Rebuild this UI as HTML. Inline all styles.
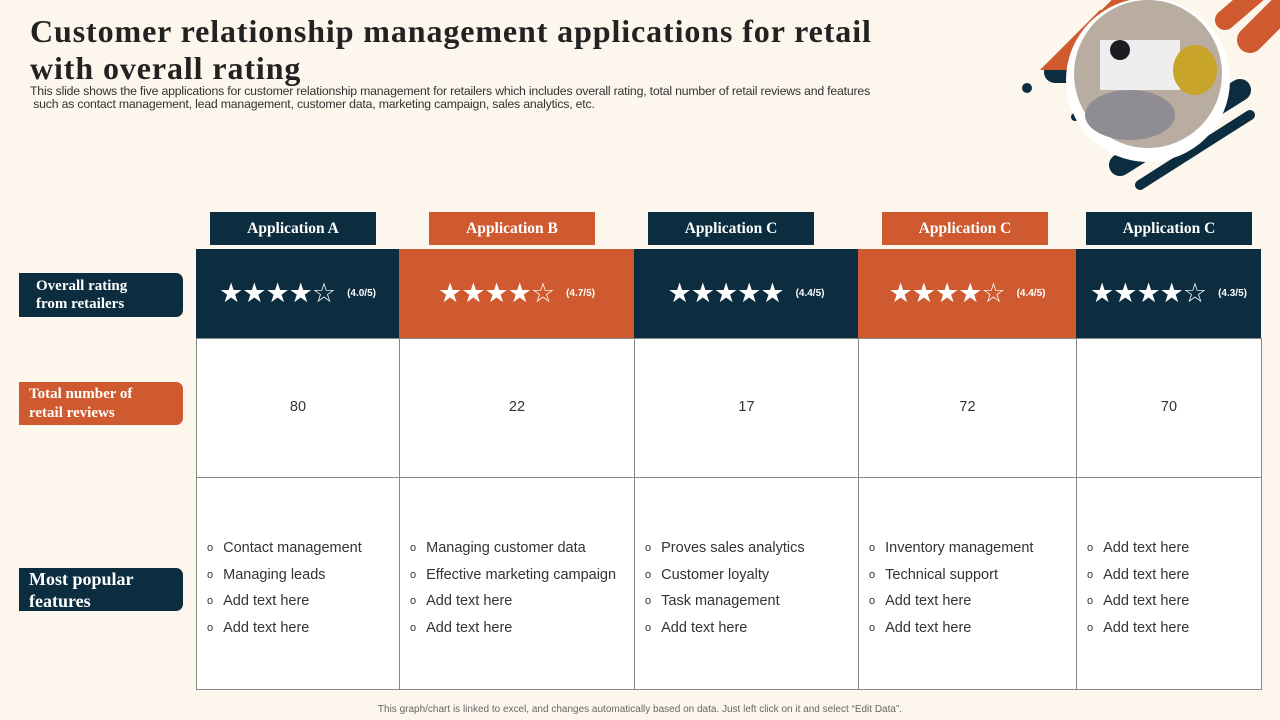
<!DOCTYPE html>
<html><head><meta charset="utf-8"><style>
*{margin:0;padding:0;box-sizing:border-box}
body{width:1280px;height:720px;background:#fdf6ec;position:relative;overflow:hidden;font-family:"Liberation Sans",sans-serif}
.a{position:absolute}
h1{position:absolute;left:30px;top:13px;font-family:"Liberation Serif",serif;font-size:32px;line-height:37px;font-weight:bold;color:#222;width:950px;white-space:nowrap;letter-spacing:0.9px}
.sub{left:30px;top:85px;font-size:12.3px;line-height:13px;color:#333;width:920px;letter-spacing:-0.2px;white-space:nowrap}
.hd{height:33px;color:#fff;font-family:"Liberation Serif",serif;font-weight:bold;font-size:15.5px;text-align:center;line-height:33px;top:212px}
.n{background:#0b2d3f}.o{background:#cf5a30}
.lab{left:19px;width:164px;color:#fff;font-family:"Liberation Serif",serif;font-weight:bold;border-radius:0 7px 7px 0;padding-left:14px}
.cell{border:1px solid #888;background:#fff}
.st{color:#fff;font-size:27px;letter-spacing:-1px;height:89px;display:flex;align-items:center;justify-content:center;gap:12px}
.st small{font-size:10px;font-weight:bold;letter-spacing:0}
.num{font-size:14.5px;color:#333;text-align:center;line-height:137px}
ul{list-style:none;padding:57px 0 0 10px;font-size:14.5px;color:#333}
li{height:26.5px;line-height:26.5px}
li:before{content:"o";font-size:11px;margin-right:10px;position:relative;top:-1px}
</style></head><body>
<h1>Customer relationship management applications for retail<br>with overall rating</h1>
<div class="a sub">This slide shows the five applications for customer relationship management for retailers which includes overall rating, total number of retail reviews and features<br>&nbsp;such as contact management, lead management, customer data, marketing campaign, sales analytics, etc.</div>

<svg class="a" style="left:1010px;top:0" width="270" height="210">
<g stroke-linecap="round" fill="none">
<line x1="60" y1="60" x2="120" y2="0" stroke="#cf5a30" stroke-width="26"/>
<line x1="240" y1="40" x2="270" y2="10" stroke="#cf5a30" stroke-width="26"/>
<line x1="215" y1="20" x2="250" y2="-10" stroke="#cf5a30" stroke-width="20"/>
<line x1="110" y1="165" x2="230" y2="90" stroke="#0b2d3f" stroke-width="22"/>
<line x1="130" y1="185" x2="240" y2="115" stroke="#0b2d3f" stroke-width="10"/>
<line x1="45" y1="72" x2="70" y2="72" stroke="#0b2d3f" stroke-width="22"/>
</g>
<path d="M30 70 L90 10 L160 10 L160 70 Z" fill="#cf5a30"/>
<circle cx="17" cy="88" r="5" fill="#0b2d3f"/><circle cx="65" cy="117" r="4" fill="#0b2d3f"/>
<circle cx="138" cy="80" r="82" fill="#fff"/>
<circle cx="138" cy="74" r="74" fill="#b9aca0"/>
<rect x="90" y="40" width="80" height="50" fill="#eee"/>
<ellipse cx="185" cy="70" rx="22" ry="25" fill="#c9a42a"/>
<ellipse cx="120" cy="115" rx="45" ry="25" fill="#8f8c93"/>
<circle cx="110" cy="50" r="10" fill="#1c1c22"/>
</svg>

<div class="a hd n" style="left:210px;width:166px">Application A</div>
<div class="a hd o" style="left:429px;width:166px">Application B</div>
<div class="a hd n" style="left:648px;width:166px">Application C</div>
<div class="a hd o" style="left:882px;width:166px">Application C</div>
<div class="a hd n" style="left:1086px;width:166px">Application C</div>

<div class="a lab n" style="top:273px;height:44px;font-size:15px;line-height:18px;padding-top:4px;padding-left:17px">Overall rating<br>from retailers</div>
<div class="a lab o" style="top:382px;height:43px;font-size:15px;line-height:19px;padding-top:3px;padding-left:10px">Total number of<br>retail reviews</div>
<div class="a lab n" style="top:568px;height:43px;font-size:18px;line-height:22px;padding-left:10px">Most popular<br>features</div>

<div class="a n st" style="left:196px;top:249px;width:203px">★★★★☆<small>(4.0/5)</small></div>
<div class="a o st" style="left:399px;top:249px;width:235px">★★★★☆<small>(4.7/5)</small></div>
<div class="a n st" style="left:634px;top:249px;width:224px">★★★★★<small>(4.4/5)</small></div>
<div class="a o st" style="left:858px;top:249px;width:218px">★★★★☆<small>(4.4/5)</small></div>
<div class="a n st" style="left:1076px;top:249px;width:185px">★★★★☆<small>(4.3/5)</small></div>

<div class="a cell num" style="left:196px;top:338px;width:204px;height:140px">80</div>
<div class="a cell num" style="left:399px;top:338px;width:236px;height:140px">22</div>
<div class="a cell num" style="left:634px;top:338px;width:225px;height:140px">17</div>
<div class="a cell num" style="left:858px;top:338px;width:219px;height:140px">72</div>
<div class="a cell num" style="left:1076px;top:338px;width:186px;height:140px">70</div>

<div class="a cell" style="left:196px;top:477px;width:204px;height:213px"><ul><li>Contact management</li><li>Managing leads</li><li>Add text here</li><li>Add text here</li></ul></div>
<div class="a cell" style="left:399px;top:477px;width:236px;height:213px"><ul><li>Managing customer data</li><li>Effective marketing campaign</li><li>Add text here</li><li>Add text here</li></ul></div>
<div class="a cell" style="left:634px;top:477px;width:225px;height:213px"><ul><li>Proves sales analytics</li><li>Customer loyalty</li><li>Task management</li><li>Add text here</li></ul></div>
<div class="a cell" style="left:858px;top:477px;width:219px;height:213px"><ul><li>Inventory management</li><li>Technical support</li><li>Add text here</li><li>Add text here</li></ul></div>
<div class="a cell" style="left:1076px;top:477px;width:186px;height:213px"><ul><li>Add text here</li><li>Add text here</li><li>Add text here</li><li>Add text here</li></ul></div>

<div class="a" style="left:0;width:1280px;top:704px;text-align:center;font-size:10px;color:#666">This graph/chart is linked to excel, and changes automatically based on data. Just left click on it and select “Edit Data”.</div>
</body></html>
